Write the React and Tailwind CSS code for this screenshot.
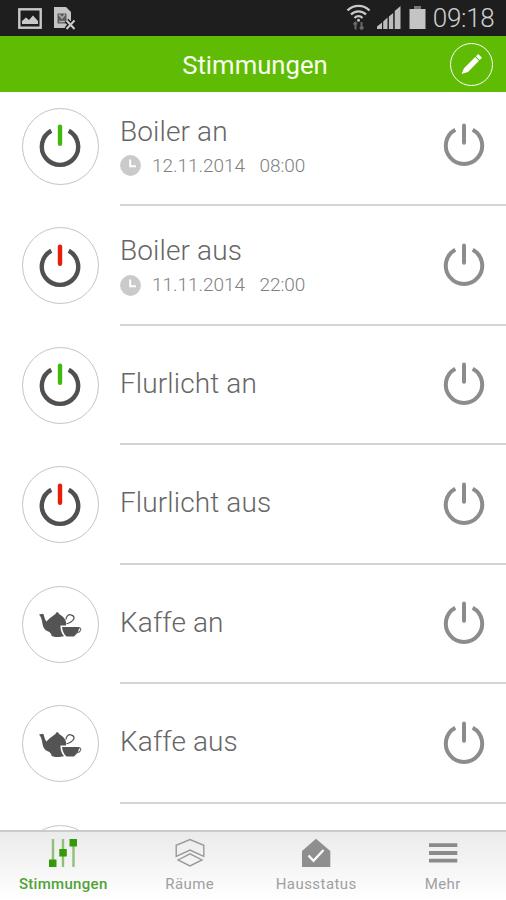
import { useState } from 'react';
import clsx from 'clsx';

const moods = [
  { id: 1, name: 'Boiler an', icon: 'on', date: '12.11.2014', time: '08:00' },
  { id: 2, name: 'Boiler aus', icon: 'off', date: '11.11.2014', time: '22:00' },
  { id: 3, name: 'Flurlicht an', icon: 'on' },
  { id: 4, name: 'Flurlicht aus', icon: 'off' },
  { id: 5, name: 'Kaffe an', icon: 'tea' },
  { id: 6, name: 'Kaffe aus', icon: 'tea' },
  { id: 7, name: '', icon: null },
];

const tabs = [
  { id: 'moods', label: 'Stimmungen', Icon: SlidersIcon },
  { id: 'rooms', label: 'Räume', Icon: RoomsIcon },
  { id: 'status', label: 'Hausstatus', Icon: HouseIcon },
  { id: 'more', label: 'Mehr', Icon: MenuIcon },
];

function PowerIcon({ bar, ring, width }) {
  return (
    <svg width="44" height="46" viewBox="0 0 44 46" fill="none">
      <path d="M13.3 7.7A18.2 18.2 0 1 0 30.7 7.7" stroke={ring} strokeWidth={width} />
      <path d="M22 3.6V20.8" stroke={bar} strokeWidth={width} strokeLinecap="round" />
    </svg>
  );
}

function TeaIcon() {
  return (
    <svg className="mt-0.5" width="44" height="30" viewBox="0 0 44 30">
      <path
        d="M1 4.5L5 3.8C6.3 5 6.2 9 8.5 11.5C10 9.5 12 8 14.5 6.2C16 5 16.5 4.5 17.5 4C18 1.8 20.5 1.8 21 4C22.5 5 24 5.8 26 8C28 10.3 28.500 13 28 15.500H22.500V18C23 21.500 24 24 26 26C22 27.5 16 27.5 13.5 25.7C13.5 24 12.5 23 10.5 21.5C7.500 20.8 6 19 5 16C4.2 12.5 3.8 7.5 1 4.5Z"
        fill="#545454"
      />
      <path d="M28 9.5C28 6 31 3.7 33.5 5.2C37.2 6.2 36.5 10 33.5 11.5C31.5 13.5 29.5 13 28.5 14" fill="none" stroke="#555" strokeWidth="1.2" />
      <path d="M24 17H41.500L40.500 20.5C39.500 23.5 37.5 24.5 36 26.500H28.5C26 24.500 24.5 21 24 17Z" fill="#545454" />
      <path d="M40 18C44.3 17 43.5 22.5 38 23" fill="none" stroke="#666" strokeWidth="1.1" />
    </svg>
  );
}

function ClockIcon() {
  return (
    <svg width="21" height="21" viewBox="0 0 21 21">
      <circle cx="10.5" cy="10.5" r="10.4" fill="#cacaca" />
      <path d="M10.2 4.5V11.2H16" fill="none" stroke="#fff" strokeWidth="2" />
    </svg>
  );
}

function SlidersIcon() {
  return (
    <svg width="30" height="30" viewBox="0 0 30 30">
      <path d="M5 1V22M15 1V29M25.5 6V29" stroke="#8fc07a" strokeWidth="2.4" />
      <path d="M1 21.5H8.5V29H1ZM11.3 11H18.8V18.5H11.3ZM21.5 1H29V8.5H21.5Z" fill="#349a0a" />
    </svg>
  );
}

function RoomsIcon() {
  return (
    <svg width="30" height="30" viewBox="0 0 30 30" fill="none" stroke="#999" strokeWidth="1.4">
      <path d="M1.2 18.3V7.3L15 1.5L28.8 7.3V18.3L15 12Z" />
      <path d="M3 22L15 15.8L27 22L15 28Z" />
    </svg>
  );
}

function HouseIcon() {
  return (
    <svg width="30" height="30" viewBox="0 0 30 30">
      <path d="M15 .8L29.3 13V29H1V13Z" fill="#8f8f8f" />
      <path d="M7.5 17.5L12.5 22.8L22.5 12" fill="none" stroke="#fff" strokeWidth="2.2" />
    </svg>
  );
}

function MenuIcon() {
  return (
    <svg width="30" height="30" viewBox="0 0 30 30">
      <path d="M1 7.2H29.3M1 15H29.3M1 22.7H29.3" stroke="#8b8b8b" strokeWidth="3.8" />
    </svg>
  );
}

function StatusBar() {
  return (
    <div className="flex h-9 shrink-0 items-center bg-[#1e1e1e] pr-[11.5px] pl-[18px]">
      <svg width="24" height="21" viewBox="0 0 24 21">
        <rect x="1.3" y="1.3" width="21.4" height="18.4" fill="none" stroke="#c8c8c8" strokeWidth="2.4" />
        <path d="M4 16V13L8 9.5L11 12L15 7.5L20 13V16Z" fill="#c8c8c8" />
      </svg>
      <svg className="ml-3" width="22" height="24" viewBox="0 0 22 24">
        <path d="M0 1H12L17 6V22H0Z" fill="#c4c4c4" />
        <path d="M3.5 7.5H12.5V17.5H3.5Z" fill="#5a5a5a" />
        <path d="M5 8.5L8 12L11 8.5M5 15.5H11" fill="none" stroke="#aaa" strokeWidth="1.5" />
        <path d="M12.5 14.5L20.5 23M20.5 14.5L12.5 23" stroke="#1e1e1e" strokeWidth="5" />
        <path d="M12.5 14.5L20.5 23M20.5 14.5L12.5 23" stroke="#ccc" strokeWidth="2" />
      </svg>
      <div className="flex-1" />
      <svg className="-mt-0.5" width="25" height="26" viewBox="0 0 25 26" fill="none" stroke="#c8c8c8" strokeWidth="2.3">
        <path d="M1.5 6.5C7.5 .3 17.5 .3 23.5 6.5" />
        <path d="M5 10.5C9 6.3 16 6.3 20 10.5" />
        <path d="M8.5 14C10.8 11.6 14.2 11.6 16.5 14" />
        <circle cx="12.5" cy="16.3" r="1.5" fill="#c8c8c8" stroke="none" />
        <path d="M9.5 25.5V18.5M7.5 20.5L9.5 18.5L11 20.5M15.5 18V25M14 23L15.5 25L17.5 23" stroke="#686868" strokeWidth="2" />
      </svg>
      <svg className="-mt-0.5 ml-1.5" width="24" height="24" viewBox="0 0 24 24" fill="#bdbdbd">
        <path d="M0 24V21.5L5 17.5V24ZM6.2 24V16.5L10.5 12.5V24ZM11.9 24V11.5L16.2 8V24ZM17.7 24V6L23.5 1V24Z" />
      </svg>
      <svg className="-mt-0.5 ml-2" width="17" height="23" viewBox="0 0 17 23">
        <path d="M5 0H12V3H5Z" fill="#777" />
        <path d="M.5 3H16.5V23H.5Z" fill="#c4c4c4" />
      </svg>
      <span className="ml-[7px] text-[26px] leading-9 font-light tracking-[-0.3px] text-[#d0d0d0]">09:18</span>
    </div>
  );
}

function MoodRow({ mood }) {
  return (
    <li className="flex h-[119.5px] shrink-0 pl-[21.5px]">
      <div className="mt-[21px] flex size-[77px] shrink-0 items-center justify-center rounded-full border border-[#c4c4c4]">
        {mood.icon === 'tea' && <TeaIcon />}
        {mood.icon === 'on' && <PowerIcon bar="#40b90c" ring="#505050" width={4.4} />}
        {mood.icon === 'off' && <PowerIcon bar="#e51d09" ring="#505050" width={4.4} />}
      </div>
      <div className="ml-[21.5px] flex flex-1 items-center border-b-2 border-[#d4d4d4] pr-5">
        <div className="flex-1">
          <div className={clsx('text-[28px] leading-8 font-light tracking-[0.12px] text-[#666]', mood.date ? 'mt-[7px]' : 'mb-px')}>
            {mood.name}
          </div>
          {mood.date && (
            <div className="mt-0.5 flex h-8 items-center text-[19px] font-light tracking-[-0.05px] text-[#808080]">
              <ClockIcon />
              <span className="ml-[11px]">{mood.date}</span>
              <span className="ml-[14.5px]">{mood.time}</span>
            </div>
          )}
        </div>
        {mood.name && (
          <button>
            <PowerIcon bar="#8c8c8c" ring="#8c8c8c" width={4} />
          </button>
        )}
      </div>
    </li>
  );
}

export default function App() {
  const [active, setActive] = useState('moods');

  return (
    <div className="flex h-[900px] w-[506px] flex-col overflow-hidden bg-white font-['Roboto',sans-serif]">
      <StatusBar />

      <header className="relative flex h-14 shrink-0 items-center justify-center bg-[#60bb04]">
        <h1 className="pt-[3px] pl-1 text-[25.7px] text-[#f7fff0]">Stimmungen</h1>
        <button className="absolute top-[6.5px] right-[13px] flex size-[43px] items-center justify-center rounded-full border-[1.5px] border-white">
          <svg width="24" height="24" viewBox="0 0 24 24" fill="#fff">
            <path d="M1.500 22L4 16.300L15.200 5L19 8.800L8 20ZM15.900 4.300L18.200 2L22 5.800L19.700 8.100Z" />
          </svg>
        </button>
      </header>

      <ul className="-mt-[5.5px] flex min-h-0 flex-1 flex-col overflow-hidden">
        {moods.map((mood) => (
          <MoodRow key={mood.id} mood={mood} />
        ))}
      </ul>

      <nav className="grid h-[70px] shrink-0 grid-cols-4 border-t-2 border-[#cbcbcb] bg-linear-to-b from-[#ebebeb] to-white">
        {tabs.map(({ id, label, Icon }) => (
          <button key={id} onClick={() => setActive(id)} className="flex flex-col items-center pt-[6px]">
            <Icon />
            <span
              className={clsx(
                'mt-1.5 text-[15px] leading-5',
                id === active ? 'font-medium tracking-[0.3px] text-[#50a238]' : 'tracking-[0.45px] text-[#a0a0a0]'
              )}
            >
              {label}
            </span>
          </button>
        ))}
      </nav>
    </div>
  );
}
